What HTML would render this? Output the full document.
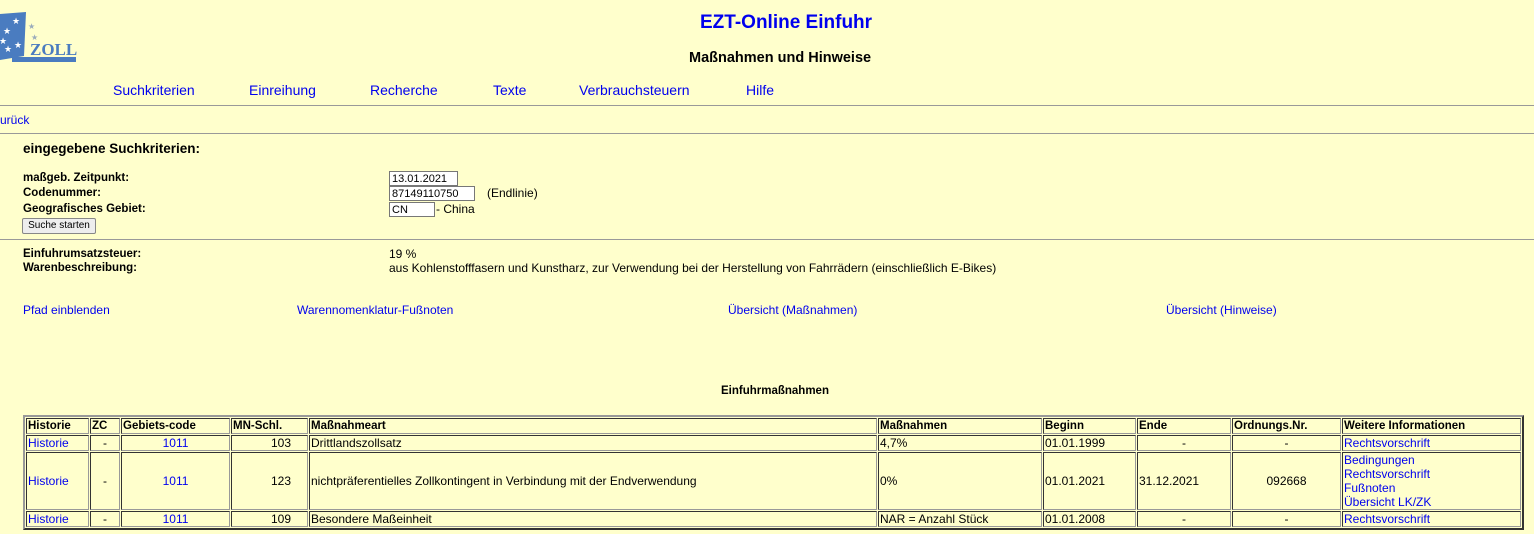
<!DOCTYPE html>
<html><head><meta charset="utf-8"><style>
body{margin:0;width:1534px;height:534px;background:#ffffcc;font-family:"Liberation Sans",Arial,sans-serif;color:#000;position:relative;overflow:hidden}
.a{position:absolute;white-space:nowrap}
a,.l{color:#0000ee;text-decoration:none}
.nav{font-size:14px;color:#0000ee}
.lab{font-size:11.5px;font-weight:bold}
.s11{font-size:12px}
input{position:absolute;height:13px;border:1px solid #777;background:#fff;font:11px "Liberation Sans",sans-serif;padding:0 2px;box-sizing:content-box}
hr{position:absolute;left:0;width:1534px;margin:0;border:0;border-top:1px solid #999;height:0}
table{position:absolute;left:23px;top:415px;width:1501px;table-layout:fixed;border-collapse:separate;border-spacing:1px;border:2px solid;border-color:#999 #333 #333 #999;font-size:12px}
td,th{border:1px solid;border-color:#333 #999 #999 #333;padding:0 1px;height:14px;line-height:14px;overflow:hidden;white-space:nowrap}
th{text-align:left;font-weight:bold;font-size:11.5px}
.c{text-align:center}.r{text-align:right;padding-right:16px}
</style></head><body>
<svg class="a" style="left:0;top:8px" width="80" height="56" viewBox="0 0 80 56">
<path d="M0 6 L26 4 L24 48 L0 52 Z" fill="#4a7cc0"/>
<rect x="12" y="49" width="64" height="5" fill="#4a7cc0"/>
<g fill="#fff" font-size="9"><text x="12" y="16">★</text><text x="3" y="26">★</text><text x="-1" y="36">★</text><text x="4" y="44">★</text><text x="14" y="40">★</text></g>
<g fill="#9ab" font-size="8"><text x="28" y="21">★</text><text x="31" y="32">★</text></g>
<text x="30" y="47" font-family="Liberation Serif,serif" font-size="17" font-weight="bold" fill="#4a7cc0">ZOLL</text>
</svg>
<div class="a" style="left:700px;top:12px;font-size:19px;font-weight:bold;color:#0000ee">EZT-Online Einfuhr</div>
<div class="a" style="left:689px;top:50px;font-size:14.5px;font-weight:bold">Maßnahmen und Hinweise</div>
<div class="a nav" style="left:113px;top:82px">Suchkriterien</div>
<div class="a nav" style="left:249px;top:82px">Einreihung</div>
<div class="a nav" style="left:370px;top:82px">Recherche</div>
<div class="a nav" style="left:493px;top:82px">Texte</div>
<div class="a nav" style="left:579px;top:82px">Verbrauchsteuern</div>
<div class="a nav" style="left:746px;top:82px">Hilfe</div>
<hr style="top:105px">
<div class="a s11 l" style="left:0;top:113px">urück</div>
<hr style="top:133px">
<div class="a" style="left:23px;top:141px;font-size:13.5px;font-weight:bold">eingegebene Suchkriterien:</div>
<div class="a lab" style="left:23px;top:172px">maßgeb. Zeitpunkt:</div>
<div class="a lab" style="left:23px;top:187px">Codenummer:</div>
<div class="a lab" style="left:23px;top:203px">Geografisches Gebiet:</div>
<input style="left:389px;top:171px;width:63px" value="13.01.2021">
<input style="left:389px;top:186px;width:80px" value="87149110750">
<input style="left:389px;top:202px;width:40px" value="CN">
<div class="a s11" style="left:487px;top:186px">(Endlinie)</div>
<div class="a s11" style="left:436px;top:202px">- China</div>
<div class="a" style="left:22px;top:218px;width:72px;height:14px;border:1px solid #888;border-radius:2px;background:#eee;font-size:10px;text-align:center;line-height:14px">Suche starten</div>
<hr style="top:239px">
<div class="a lab" style="left:23px;top:248px">Einfuhrumsatzsteuer:</div>
<div class="a lab" style="left:23px;top:262px">Warenbeschreibung:</div>
<div class="a s11" style="left:389px;top:247px">19 %</div>
<div class="a s11" style="left:389px;top:261px">aus Kohlenstofffasern und Kunstharz, zur Verwendung bei der Herstellung von Fahrrädern (einschließlich E-Bikes)</div>
<div class="a s11 l" style="left:23px;top:303px">Pfad einblenden</div>
<div class="a s11 l" style="left:297px;top:303px">Warennomenklatur-Fußnoten</div>
<div class="a s11 l" style="left:728px;top:303px">Übersicht (Maßnahmen)</div>
<div class="a s11 l" style="left:1166px;top:303px">Übersicht (Hinweise)</div>
<div class="a" style="left:721px;top:385px;font-size:11.5px;font-weight:bold">Einfuhrmaßnahmen</div>
<table>
<colgroup><col style="width:63px"><col style="width:30px"><col style="width:109px"><col style="width:77px"><col style="width:568px"><col style="width:164px"><col style="width:93px"><col style="width:94px"><col style="width:109px"><col></colgroup>
<tr><th>Historie</th><th>ZC</th><th>Gebiets-code</th><th>MN-Schl.</th><th>Maßnahmeart</th><th>Maßnahmen</th><th>Beginn</th><th>Ende</th><th>Ordnungs.Nr.</th><th>Weitere Informationen</th></tr>
<tr><td class="l">Historie</td><td class="c">-</td><td class="c l">1011</td><td class="r">103</td><td>Drittlandszollsatz</td><td>4,7%</td><td>01.01.1999</td><td class="c">-</td><td class="c">-</td><td class="l">Rechtsvorschrift</td></tr>
<tr><td class="l" style="height:56px">Historie</td><td class="c">-</td><td class="c l">1011</td><td class="r">123</td><td>nichtpräferentielles Zollkontingent in Verbindung mit der Endverwendung</td><td>0%</td><td>01.01.2021</td><td>31.12.2021</td><td class="c">092668</td><td class="l">Bedingungen<br>Rechtsvorschrift<br>Fußnoten<br>Übersicht LK/ZK</td></tr>
<tr><td class="l">Historie</td><td class="c">-</td><td class="c l">1011</td><td class="r">109</td><td>Besondere Maßeinheit</td><td>NAR = Anzahl Stück</td><td>01.01.2008</td><td class="c">-</td><td class="c">-</td><td class="l">Rechtsvorschrift</td></tr>
</table>
</body></html>
